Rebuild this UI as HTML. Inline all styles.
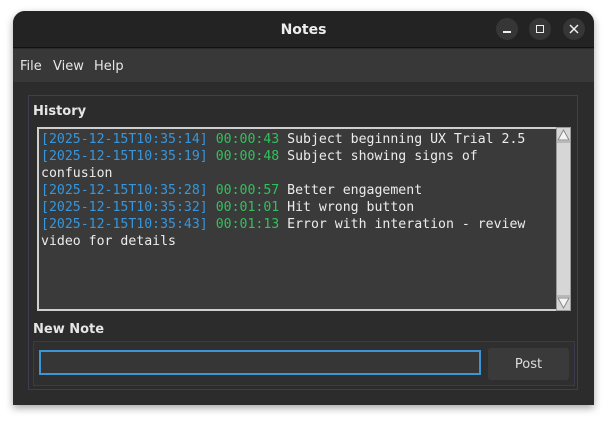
<!DOCTYPE html>
<html><head><style>
*{margin:0;padding:0;box-sizing:border-box}
body{width:607px;height:421px;background:#fff;position:relative;overflow:hidden;font-family:"Liberation Sans","DejaVu Sans",sans-serif}
.win{position:absolute;left:13px;top:11px;width:581px;height:394px;background:#2c2c2c;border-radius:12px 12px 0 0;box-shadow:0 3px 8px rgba(0,0,0,.35);overflow:hidden}
.title{position:absolute;left:0;top:0;width:581px;height:37px;background:#232323;border-bottom:1px solid #111}
.title .t{position:absolute;left:0;width:100%;top:11px;text-align:center;color:#eee;font-weight:bold;font-size:14px;font-family:"DejaVu Sans",sans-serif}
.btn{position:absolute;top:7px;width:22px;height:22px;border-radius:50%;background:#363636}
.menu{position:absolute;left:0;top:38px;width:581px;height:33px;background:#383838;color:#e6e6e6;font-size:13px;font-family:"DejaVu Sans",sans-serif}
.menu span{position:absolute;top:10px}
.frame{position:absolute;left:15px;top:84px;width:550px;height:295px;border:1px solid #3e3e52}
.lbl{position:absolute;color:#e6e6e6;font-weight:bold;font-size:13px;font-family:"DejaVu Sans",sans-serif}
.ta{position:absolute;left:24px;top:116px;width:520px;height:184px;background:#3a3a3a;border:2px solid #cfcfcf;border-right:none;font-family:"DejaVu Sans Mono",monospace;font-size:13.2px;line-height:17px;color:#ececec;padding:2px 0 0 2px;white-space:pre}
.b{color:#3796dc}.g{color:#2fc25b}
.sb{position:absolute;left:543px;top:116px;width:15px;height:184px;background:#d6d6d6;border:1px solid #9a9a9a}
.inner{position:absolute;left:20px;top:330px;width:542px;height:45px;border:1px solid #3a3a4e;background:#2f2f2f}
.inp{position:absolute;left:26px;top:339px;width:442px;height:25px;border:2px solid #3f95d4;background:#363636}
.post{position:absolute;left:475px;top:337px;width:81px;height:32px;background:#3a3a3a;border-radius:3px;color:#ddd;font-size:13px;text-align:center;line-height:34px;font-family:"DejaVu Sans",sans-serif}
</style></head><body>
<div class="win">
 <div class="title"><div class="t">Notes</div>
  <div class="btn" style="left:483px"><div style="position:absolute;left:7px;top:13px;width:8px;height:1.5px;background:#eee"></div></div>
  <div class="btn" style="left:516px"><div style="position:absolute;left:7px;top:7px;width:8px;height:8px;border:1.5px solid #eee"></div></div>
  <div class="btn" style="left:550px"><svg width="22" height="22" style="position:absolute;left:0;top:0"><path d="M7 7L15 15M15 7L7 15" stroke="#eee" stroke-width="1.5"/></svg></div>
 </div>
 <div class="menu"><span style="left:7px">File</span><span style="left:40px">View</span><span style="left:81px">Help</span></div>
 <div class="frame"></div>
 <div class="lbl" style="left:20px;top:93px">History</div>
 <div class="ta"><span class="b">[2025-12-15T10:35:14]</span> <span class="g">00:00:43</span> Subject beginning UX Trial 2.5
<span class="b">[2025-12-15T10:35:19]</span> <span class="g">00:00:48</span> Subject showing signs of
confusion
<span class="b">[2025-12-15T10:35:28]</span> <span class="g">00:00:57</span> Better engagement
<span class="b">[2025-12-15T10:35:32]</span> <span class="g">00:01:01</span> Hit wrong button
<span class="b">[2025-12-15T10:35:43]</span> <span class="g">00:01:13</span> Error with interation - review
video for details</div>
 <div class="sb"><svg width="13" height="182" style="position:absolute;left:0;top:0"><path d="M6.5 2L12 12H1Z" fill="#f4f4f4" stroke="#888" stroke-width="1"/><path d="M0 14H13M0 168H13" stroke="#999"/><path d="M6.5 180L12 170H1Z" fill="#f4f4f4" stroke="#888" stroke-width="1"/></svg></div>
 <div class="lbl" style="left:20px;top:311px">New Note</div>
 <div class="inner"></div>
 <div class="inp"></div>
 <div class="post">Post</div>
</div>
</body></html>
